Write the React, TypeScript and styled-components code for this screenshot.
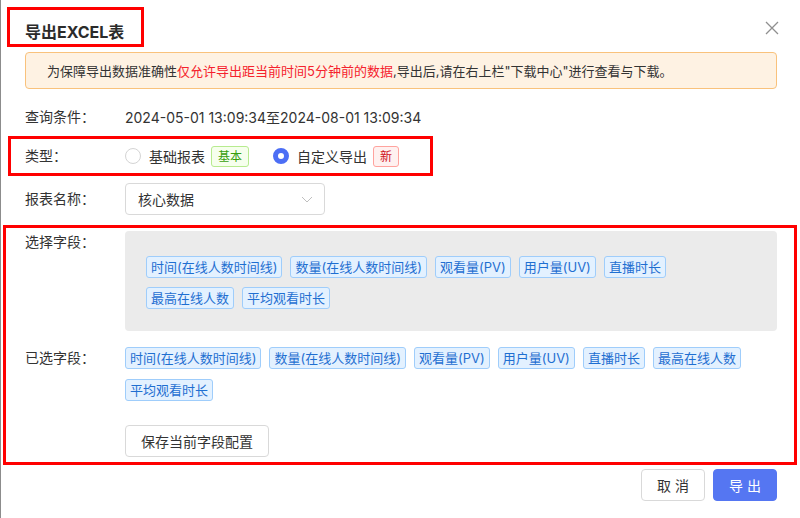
import React from 'react';
import styled, { createGlobalStyle } from 'styled-components';

const GlobalStyle = createGlobalStyle`
  html, body {
    margin: 0;
    padding: 0;
    background: #fff;
  }
  body {
    font-family: Inter, "Noto Sans CJK SC", sans-serif;
    font-size: 14px;
    color: #333;
  }
  * {
    box-sizing: border-box;
  }
`;

const Dialog = styled.div`
  position: relative;
  width: 800px;
  height: 518px;
  background: #fff;
  border-left: 1px solid #8c8c8c;
  padding: 0 24px 0 24px;
  overflow: hidden;
`;

const Mark = styled.div`
  border: 3px solid #ff0000;
`;

const TitleMark = styled(Mark)`
  width: 137px;
  height: 40px;
  margin: 7px 0 0 -18px;
  padding: 11px 0 0 15px;
`;

const Title = styled.div`
  font-size: 16px;
  font-weight: 700;
  line-height: 22px;
  color: #2b2b2b;
`;

const Close = styled.button`
  position: absolute;
  top: 20px;
  right: 20px;
  width: 16px;
  height: 16px;
  padding: 0;
  border: 0;
  background: none;
  display: flex;
`;

const Alert = styled.div`
  margin-top: 5px;
  height: 37px;
  margin-right: -1px;
  display: flex;
  align-items: center;
  padding-left: 21px;
  background: #fef2e3;
  border: 1px solid #f9c27c;
  border-radius: 4px;
  font-size: 13px;
  color: #333;
`;

const Warn = styled.span`
  color: #f5222d;
`;

const Row = styled.div<{ $top?: number }>`
  display: flex;
  align-items: center;
  margin-top: ${({ $top }) => $top ?? 0}px;
  min-height: 22px;
`;

const Label = styled.div`
  width: 100px;
  flex-shrink: 0;
  line-height: 22px;
  color: #333;
`;

const TopLabel = styled(Label)`
  align-self: flex-start;
`;

const TypeMark = styled(Mark)`
  width: 425px;
  margin: 8px 0 0 -17px;
  padding-left: 14px;
  height: 40px;
  display: flex;
  align-items: center;
`;

const RadioItem = styled.label`
  display: flex;
  align-items: center;
  margin-right: 24px;
  cursor: pointer;
`;

const RadioDot = styled.span<{ $checked?: boolean }>`
  width: 16px;
  height: 16px;
  border-radius: 50%;
  border: ${({ $checked }) => ($checked ? '5px solid #4c6ef5' : '1px solid #d4d4d4')};
  background: #fff;
  margin-right: 8px;
`;

const Badge = styled.span<{ $tone: 'green' | 'red' }>`
  margin-left: 6px;
  height: 21px;
  line-height: 19px;
  padding: 0 6px;
  font-size: 12px;
  border-radius: 3px;
  border: 1px solid ${({ $tone }) => ($tone === 'green' ? '#b7eb8f' : '#ffa39e')};
  background: ${({ $tone }) => ($tone === 'green' ? '#f6ffed' : '#fff1f0')};
  color: ${({ $tone }) => ($tone === 'green' ? '#389e0d' : '#cf1322')};
`;

const Select = styled.div`
  width: 200px;
  height: 32px;
  border: 1px solid #d9d9d9;
  border-radius: 4px;
  display: flex;
  align-items: center;
  justify-content: space-between;
  padding: 0 11px 0 12px;
`;

const FieldsMark = styled(Mark)`
  margin: 10px -21px 0 -22px;
  height: 240px;
  padding: 3px 17px 0 19px;
`;

const Pool = styled.div`
  flex: 1;
  height: 100px;
  background: #ebebeb;
  border-radius: 4px;
  padding: 25px 21px 0 21px;
  display: flex;
  flex-wrap: wrap;
  align-content: flex-start;
  gap: 9px 8px;
`;

const TagList = styled.div`
  flex: 1;
  display: flex;
  flex-wrap: wrap;
  gap: 10px 8px;
`;

const FieldTag = styled.span`
  height: 22px;
  line-height: 20px;
  padding: 0 4px;
  font-size: 13px;
  color: #1f6fd1;
  background: #e3f1ff;
  border: 1px solid #9fcdfb;
  border-radius: 3px;
`;

const Button = styled.button<{ $primary?: boolean }>`
  height: 32px;
  padding: 0 15px;
  font-family: inherit;
  font-size: 14px;
  border-radius: 4px;
  border: 1px solid ${({ $primary }) => ($primary ? '#5576f2' : '#d9d9d9')};
  background: ${({ $primary }) => ($primary ? '#5576f2' : '#fff')};
  color: ${({ $primary }) => ($primary ? '#fff' : '#333')};
`;

const SaveRow = styled.div`
  margin: 24px 0 0 100px;
`;

const Footer = styled.div`
  display: flex;
  justify-content: flex-end;
  gap: 8px;
  margin: 4px -1px 0 0;
`;

const FooterButton = styled(Button)`
  width: 64px;
  padding: 0;
  letter-spacing: 4px;
  text-indent: 4px;
`;

const fields = ['时间(在线人数时间线)', '数量(在线人数时间线)', '观看量(PV)', '用户量(UV)', '直播时长', '最高在线人数', '平均观看时长'];

const App = () => {
  return (
    <>
      <GlobalStyle />
      <Dialog>
        <TitleMark>
          <Title>导出EXCEL表</Title>
        </TitleMark>
        <Close aria-label="close">
          <svg width="16" height="16" viewBox="0 0 16 16">
            <path d="M2 2 L14 14 M14 2 L2 14" stroke="#8f8f8f" strokeWidth="1.3" fill="none" />
          </svg>
        </Close>
        <Alert>
          为保障导出数据准确性<Warn>仅允许导出距当前时间5分钟前的数据</Warn>,导出后,请在右上栏"下载中心"进行查看与下载。
        </Alert>
        <Row $top={17}>
          <Label>查询条件：</Label>
          <span>2024-05-01 13:09:34至2024-08-01 13:09:34</span>
        </Row>
        <TypeMark>
          <Label>类型：</Label>
          <RadioItem>
            <RadioDot />
            基础报表
            <Badge $tone="green">基本</Badge>
          </RadioItem>
          <RadioItem>
            <RadioDot $checked />
            自定义导出
            <Badge $tone="red">新</Badge>
          </RadioItem>
        </TypeMark>
        <Row $top={7}>
          <Label>报表名称：</Label>
          <Select>
            <span>核心数据</span>
            <svg width="12" height="12" viewBox="0 0 12 12">
              <path d="M1 4 L6 9 L11 4" stroke="#bfbfbf" strokeWidth="1" fill="none" />
            </svg>
          </Select>
        </Row>
        <FieldsMark>
          <Row>
            <TopLabel>选择字段：</TopLabel>
            <Pool>
              {fields.map((f) => (
                <FieldTag key={f}>{f}</FieldTag>
              ))}
            </Pool>
          </Row>
          <Row $top={16}>
            <TopLabel>已选字段：</TopLabel>
            <TagList>
              {fields.map((f) => (
                <FieldTag key={f}>{f}</FieldTag>
              ))}
            </TagList>
          </Row>
          <SaveRow>
            <Button>保存当前字段配置</Button>
          </SaveRow>
        </FieldsMark>
        <Footer>
          <FooterButton>取消</FooterButton>
          <FooterButton $primary>导出</FooterButton>
        </Footer>
      </Dialog>
    </>
  );
};

export default App;
